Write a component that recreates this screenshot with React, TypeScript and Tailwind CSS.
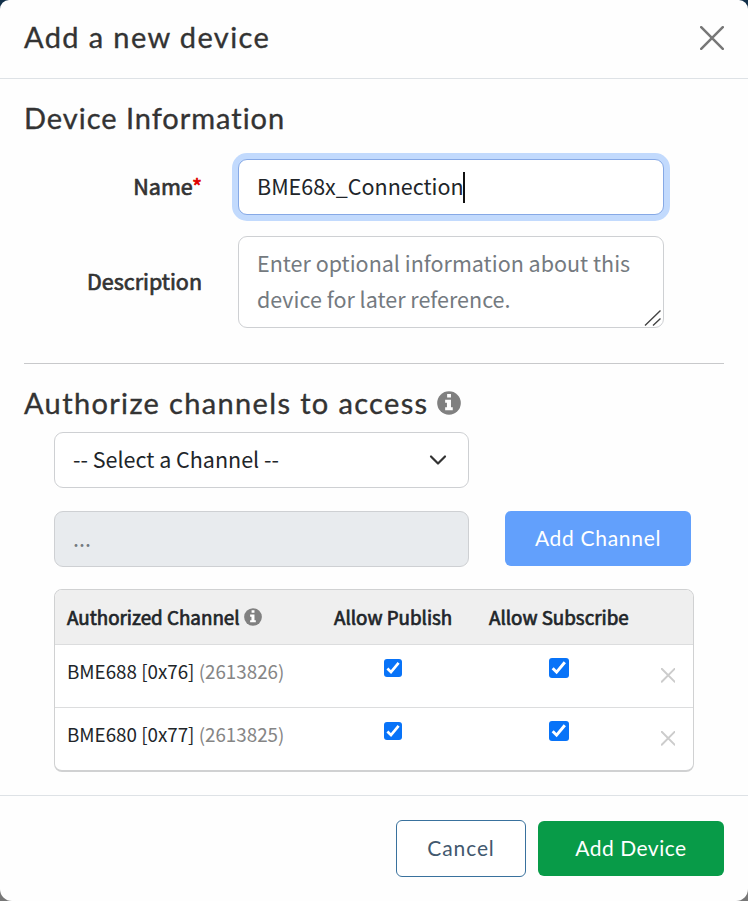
import { useState } from 'react';

const heading = "font-['Lato','Noto_Sans',sans-serif] text-[29px] leading-[34px] text-[#333] [-webkit-text-stroke:0.35px]";
const sans = "font-['Noto_Sans_CJK_SC','Noto_Sans',sans-serif]";
const label = 'w-[178px] pb-[3px] text-right text-[21.5px] leading-8 text-[#333] [-webkit-text-stroke:0.7px]';

function InfoIcon({ className }: { className: string }) {
  return (
    <svg viewBox="0 0 512 512" className={className} fill="#808080">
      <circle cx="256" cy="256" r="252" />
      <path
        fill="currentColor"
        d="M216 65h82v72h-82zM174 188h124v158h38v62H174v-62h38v-96h-38z"
      />
    </svg>
  );
}

function Cross({ className, weight }: { className: string; weight: number }) {
  return (
    <svg viewBox="0 0 24 24" className={className} fill="none" stroke="currentColor" strokeWidth={weight} strokeLinecap="round">
      <path d="M1.200 1.200 22.800 22.800M22.800 1.200 1.200 22.800" />
    </svg>
  );
}

function Check({ className, label }: { className: string; label: string }) {
  const [on, setOn] = useState(true);
  return (
    <button
      role="checkbox"
      aria-checked={on}
      aria-label={label}
      onClick={() => setOn(!on)}
      className={`block rounded-[3px] bg-[#0873f8] ${className}`}
    >
      {on && (
        <svg viewBox="0 0 18 18" className="size-full" fill="none" stroke="white" strokeWidth="2.700">
          <path d="M3.400 9.500 7 13.100 14.600 3.900" />
        </svg>
      )}
    </button>
  );
}

const channels = [
  { name: 'BME688 [0x76]', id: '(2613826)' },
  { name: 'BME680 [0x77]', id: '(2613825)' },
];

export default function App() {
  return (
    <div className={`h-[901px] w-[748px] overflow-hidden bg-linear-to-b from-[#12304a] from-50% to-[#777] to-50% text-[#212529] ${sans}`}>
      <div className="flex h-[901px] flex-col rounded-t-[9px] rounded-b-[12px] bg-[#fefefe]">
        <header className="flex h-[79px] shrink-0 items-center justify-between border-b border-[#dee2e6] pr-6 pl-6">
          <h1 className={`${heading} -mt-1 tracking-[1.380px]`}>Add a new device</h1>
          <button aria-label="Close" className="-mt-0.5"><Cross className="size-6 text-[#777]" weight={2.500} /></button>
        </header>

        <main className="flex h-[716px] shrink-0 flex-col px-6 pt-[22px]">
          <h2 className={`${heading} tracking-[0.970px]`}>Device Information</h2>
          <div className="mt-[24px] flex h-14 items-center">
            <label className={label}>
              Name<span className="text-[#e00000]">*</span>
            </label>
            <div className="ml-[36px] flex h-14 w-[426px] items-center rounded-[9px] border border-[#86a9e6] bg-white pl-[18px] shadow-[0_0_0_6px_#c2dafd]">
              <span className="-mr-px pb-[3px] text-[21.5px] leading-8">BME68x_Connection</span>
              <span className="h-[31px] w-[2px] bg-[#111]" />
            </div>
          </div>
          <div className="mt-[21px] flex h-[92px] items-center">
            <label className={label}>Description</label>
            <div className="relative ml-[36px] h-[92px] w-[426px] rounded-[9px] border border-[#ced0d3] bg-white pt-[8px] pl-[18px] text-[21.5px] leading-9 text-[#747a80]">
              <p>Enter optional information about this</p>
              <p>device for later reference.</p>
              <svg viewBox="0 0 18 18" className="absolute right-[1px] bottom-[0px] size-[18px]" stroke="#444" strokeWidth="1.400">
                <path d="M1 16.500 16.500 1.500M9 16.500 16.500 9.500" />
              </svg>
            </div>
          </div>
          <hr className="mt-[35px] border-[#c8c9cb]" />
          <div className="mt-[22px] flex h-[34px] items-center">
            <h2 className={`${heading} tracking-[1.350px]`}>Authorize channels to access</h2>
            <InfoIcon className="ml-[8px] size-6 text-white" />
          </div>
          <div className="mt-[12px] ml-[30px] flex h-14 w-[415px] items-center justify-between rounded-[9px] border border-[#ced0d3] bg-white pr-[21px] pl-[18px]">
            <span className="pb-[3px] text-[21.5px] leading-8">-- Select a Channel --</span>
            <svg viewBox="0 0 18 18" className="size-[18px]" fill="none" stroke="#333" strokeWidth="2.200" strokeLinecap="round" strokeLinejoin="round">
              <path d="M2 5.500 9 12.500 16 5.500" />
            </svg>
          </div>
          <div className="mt-[23px] ml-[30px] flex">
            <div className="flex h-14 w-[415px] items-center rounded-[9px] border border-[#ced0d3] bg-[#e8ebee] pl-[18px]">
              <span className="pb-[3px] text-[21.5px] leading-8 text-[#747a80]">...</span>
            </div>
            <button className="ml-9 h-[55px] w-[186px] rounded-md bg-[#62a0fc] pb-0.5 font-['Lato','Noto_Sans',sans-serif] text-[21px] tracking-[0.700px] text-white">
              Add Channel
            </button>
          </div>
          <div className="mt-[22px] ml-[30px] h-[183px] w-[640px] shrink-0 overflow-hidden rounded-[8px] border border-b-2 border-[#d0d1d2] bg-white">
            <div className="flex h-[55px] items-center border-b border-[#dcddde] bg-[#efefef] text-[18.800px] leading-8">
              <div className="flex w-[279px] items-center pb-px pl-3">
                <span className="[-webkit-text-stroke:0.7px]">Authorized Channel</span>
                <InfoIcon className="ml-1 size-[18px] text-white" />
              </div>
              <span className="w-[155px] pb-px [-webkit-text-stroke:0.7px]">Allow Publish</span>
              <span className="pb-px [-webkit-text-stroke:0.7px]">Allow Subscribe</span>
            </div>
            {channels.map((c) => (
              <div key={c.id} className="flex h-[63px] border-b border-[#dcddde] text-[18.800px] last:border-b-0">
                <div className="w-[329px] pt-[10px] pl-3 leading-8">
                  {c.name} <span className="text-[#858585]">{c.id}</span>
                </div>
                <Check label="Allow publish" className="mt-3.5 size-[18px]" />
                <Check label="Allow subscribe" className="mt-[13px] ml-[147px] size-[19.500px]" />
                <button aria-label="Remove" className="mt-[23px] ml-[92px] size-[15px]">
                  <Cross className="size-[14.500px] text-[#ccc]" weight={3.200} />
                </button>
              </div>
            ))}
          </div>
        </main>

        <footer className="flex h-[106px] shrink-0 justify-end gap-3 border-t border-[#dee2e6] pt-6 pr-6 font-['Lato','Noto_Sans',sans-serif] text-[21px] tracking-[0.500px]">
          <button className="h-[57px] w-[130px] rounded-md border border-[#39719d] bg-white pb-0.5 tracking-[0.900px] text-[#42586e]">Cancel</button>
          <button className="mt-px h-[55px] w-[186px] rounded-md bg-[#089b48] pb-0.5 text-white">Add Device</button>
        </footer>
      </div>
    </div>
  );
}
